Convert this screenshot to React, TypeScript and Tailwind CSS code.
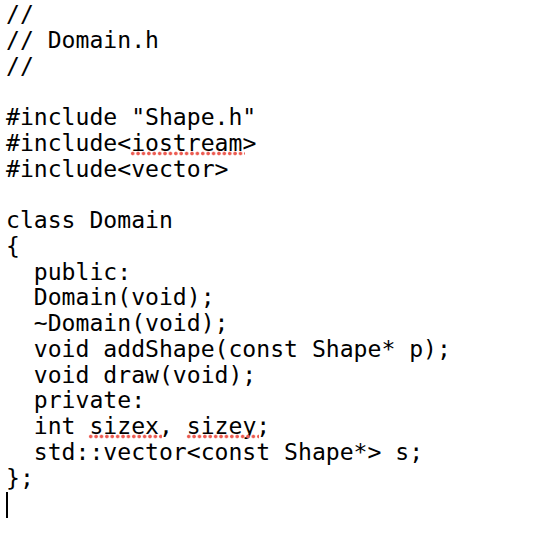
import React from "react";

const Sq = ({ children }: { children: React.ReactNode }) => (
  <span className="relative">
    {children}
    <span className="absolute left-[-1px] right-[-3px] bottom-[0px] h-[5px] bg-[radial-gradient(circle,#ec5a50_1.3px,rgba(236,90,80,0.45)_1.8px,transparent_2.3px)] bg-[length:5.4px_5px]" />
  </span>
);

export default function App() {
  return (
    <div className="w-[534px] h-[538px] bg-white overflow-hidden">
      <pre className="m-0 pl-[6px] pt-[2px] text-[23.1px] leading-[25.75px] text-black font-['DejaVu_Sans_Mono',monospace]">
{"//\n// Domain.h\n//\n\n#include \"Shape.h\"\n#include<"}<Sq>iostream</Sq>{">\n#include<vector>\n\nclass Domain\n{\n  public:\n  Domain(void);\n  ~Domain(void);\n  void addShape(const Shape* p);\n  void draw(void);\n  private:\n  int "}<Sq>sizex</Sq>{", "}<Sq>sizey</Sq>{";\n  std::vector<const Shape*> s;\n};\n"}<span className="inline-block w-[2px] h-[26px] bg-black align-[-7px]" />
      </pre>
    </div>
  );
}
